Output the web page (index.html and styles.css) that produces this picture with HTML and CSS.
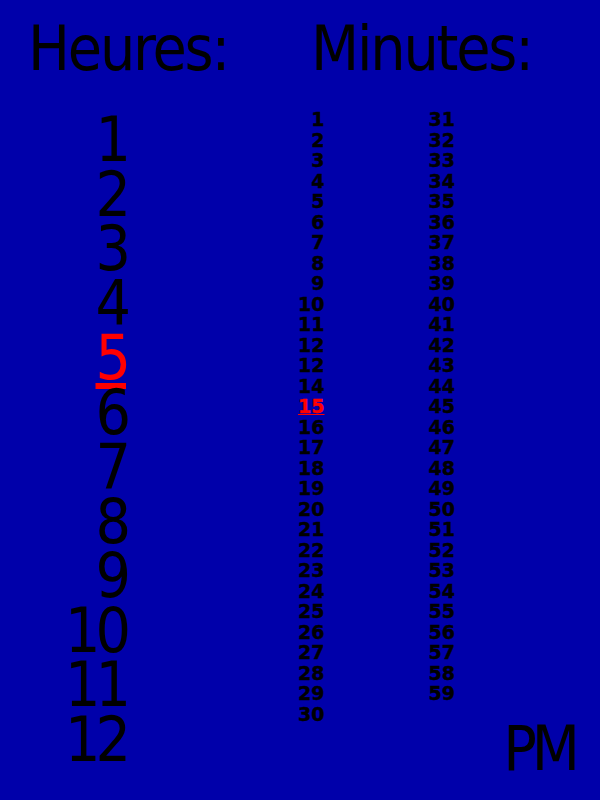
FILE: index.html
```html
<!DOCTYPE html>
<html lang="fr">
<head>
<meta charset="utf-8">
<title>Heures / Minutes</title>
<link rel="stylesheet" href="styles.css">
</head>
<body>
<div class="screen">
  <header class="titles">
    <div class="title title-hours">Heures:</div>
    <div class="title title-minutes">Minutes:</div>
  </header>
  <main class="lists">
    <ol class="hours">
      <li>1</li><li>2</li><li>3</li><li>4</li><li class="sel">5</li><li>6</li>
      <li>7</li><li>8</li><li>9</li><li>10</li><li>11</li><li>12</li>
    </ol>
    <ol class="minutes">
      <li>1</li><li>2</li><li>3</li><li>4</li><li>5</li><li>6</li><li>7</li><li>8</li><li>9</li><li>10</li>
      <li>11</li><li>12</li><li>12</li><li>14</li><li class="sel">15</li><li>16</li><li>17</li><li>18</li><li>19</li><li>20</li>
      <li>21</li><li>22</li><li>23</li><li>24</li><li>25</li><li>26</li><li>27</li><li>28</li><li>29</li><li>30</li>
    </ol>
    <ol class="minutes">
      <li>31</li><li>32</li><li>33</li><li>34</li><li>35</li><li>36</li><li>37</li><li>38</li><li>39</li><li>40</li>
      <li>41</li><li>42</li><li>43</li><li>44</li><li>45</li><li>46</li><li>47</li><li>48</li><li>49</li><li>50</li>
      <li>51</li><li>52</li><li>53</li><li>54</li><li>55</li><li>56</li><li>57</li><li>58</li><li>59</li>
    </ol>
    <div class="ampm">PM</div>
  </main>
</div>
</body>
</html>
```
FILE: styles.css
```css
html, body {
  margin: 0;
  padding: 0;
  background: #0000aa;
}

.screen {
  width: 600px;
  height: 800px;
  display: flex;
  flex-direction: column;
  color: #000;
  font-family: "DejaVu Sans Condensed", "DejaVu Sans", sans-serif;
}

.titles {
  display: flex;
  padding: 17.5px 0 0 28px;
  height: 62px;
}

.title {
  font-size: 62px;
  line-height: 62px;
  letter-spacing: -2.2px;
  white-space: nowrap;
}

.title-hours {
  width: 283px;
}

.lists {
  flex: 1;
  display: grid;
  grid-template-columns: 131px 193.5px 130.5px 1fr;
  margin-top: 29.7px;
  padding-bottom: 20.5px;
}

.hours, .minutes {
  list-style: none;
  margin: 0;
  padding: 0;
  text-align: right;
}

.hours {
  padding-top: 4.1px;
  padding-right: 5px;
  font-size: 62px;
  line-height: 54.5px;
  letter-spacing: -5px;
}

.minutes {
  font-family: "DejaVu Sans", sans-serif;
  font-weight: bold;
  font-size: 19px;
  line-height: 20.5px;
  -webkit-text-stroke: 0.4px currentColor;
}

.sel {
  color: #ff0000;
  text-decoration: underline;
}

.hours .sel {
  text-underline-offset: 4px;
}

.minutes .sel {
  text-underline-offset: 1px;
}

.ampm {
  align-self: end;
  justify-self: end;
  margin-right: 25px;
  font-size: 62px;
  line-height: 62px;
  letter-spacing: -5px;
}
```
